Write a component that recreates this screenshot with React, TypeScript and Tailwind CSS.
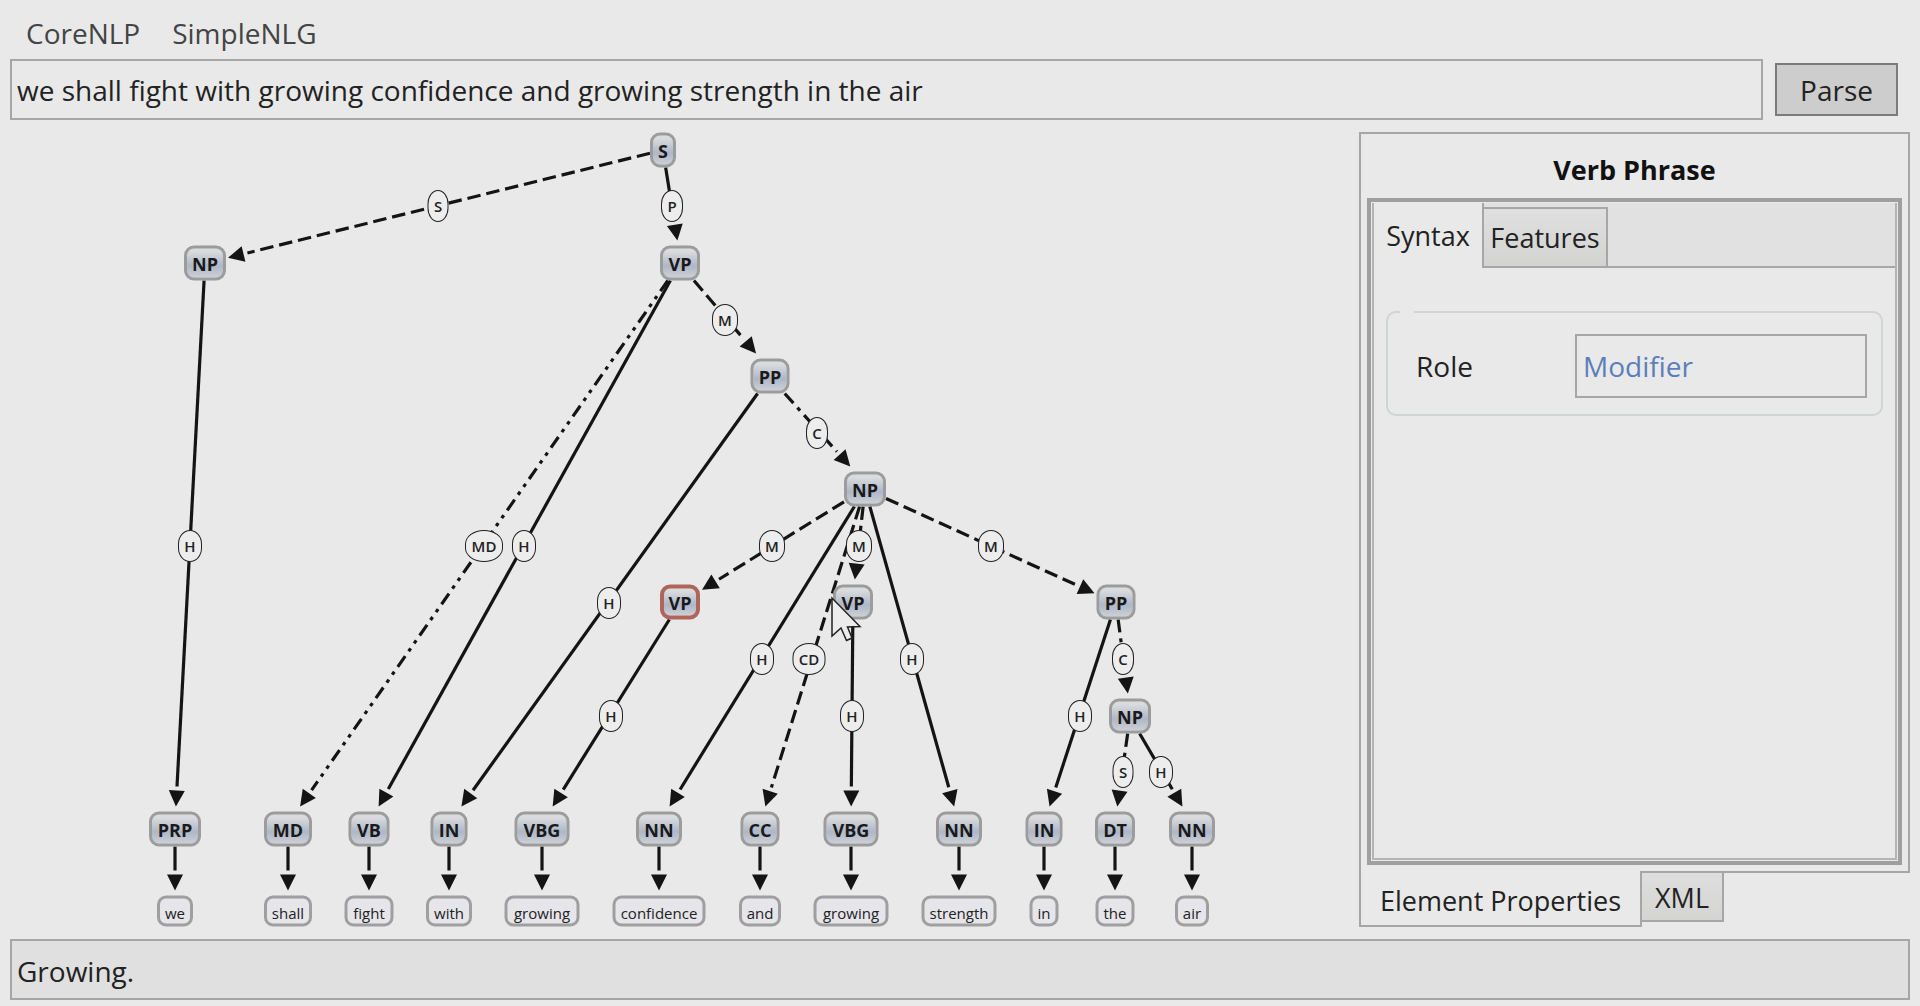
import type { ReactNode } from "react";

type Kind = "solid" | "dash" | "dashDot" | "dashDotDot";

interface GraphNode {
  id: string;
  text: string;
  x: number;
  y: number;
  w: number;
  selected?: boolean;
  word?: boolean;
}

interface Edge {
  from: string;
  to: string;
  kind?: Kind;
  label?: string;
  lx?: number;
  ly?: number;
}

const phrases: GraphNode[] = [
  { id: "s", text: "S", x: 653, y: 18, w: 26 },
  { id: "np1", text: "NP", x: 195, y: 131, w: 42 },
  { id: "vp1", text: "VP", x: 670, y: 131, w: 40 },
  { id: "pp1", text: "PP", x: 760, y: 244, w: 39 },
  { id: "np2", text: "NP", x: 855, y: 357, w: 42 },
  { id: "vp2", text: "VP", x: 670, y: 470, w: 40, selected: true },
  { id: "vp3", text: "VP", x: 843, y: 470, w: 40 },
  { id: "pp2", text: "PP", x: 1106, y: 470, w: 39 },
  { id: "np3", text: "NP", x: 1120, y: 584, w: 42 },
];

const leaves: { tag: string; word: string; x: number; w: number; ww: number }[] = [
  { tag: "PRP", word: "we", x: 165, w: 52, ww: 36 },
  { tag: "MD", word: "shall", x: 278, w: 48, ww: 48 },
  { tag: "VB", word: "fight", x: 359, w: 41, ww: 49 },
  { tag: "IN", word: "with", x: 439, w: 37, ww: 46 },
  { tag: "VBG", word: "growing", x: 532, w: 55, ww: 75 },
  { tag: "NN", word: "confidence", x: 649, w: 46, ww: 93 },
  { tag: "CC", word: "and", x: 750, w: 39, ww: 42 },
  { tag: "VBG", word: "growing", x: 841, w: 55, ww: 75 },
  { tag: "NN", word: "strength", x: 949, w: 46, ww: 75 },
  { tag: "IN", word: "in", x: 1034, w: 37, ww: 29 },
  { tag: "DT", word: "the", x: 1105, w: 40, ww: 39 },
  { tag: "NN", word: "air", x: 1182, w: 46, ww: 34 },
];

const nodes: GraphNode[] = [
  ...phrases,
  ...leaves.map((l, i) => ({ id: `t${i}`, text: l.tag, x: l.x, y: 697, w: l.w })),
  ...leaves.map((l, i) => ({ id: `w${i}`, text: l.word, x: l.x, y: 779, w: l.ww, word: true })),
];

const edges: Edge[] = [
  { from: "s", to: "np1", kind: "dash", label: "S", lx: 428, ly: 74 },
  { from: "s", to: "vp1", label: "P", lx: 662, ly: 74 },
  { from: "np1", to: "t0", label: "H", lx: 180, ly: 414 },
  { from: "vp1", to: "t1", kind: "dashDotDot", label: "MD", lx: 474, ly: 414 },
  { from: "vp1", to: "t2", label: "H", lx: 514, ly: 414 },
  { from: "vp1", to: "pp1", kind: "dash", label: "M", lx: 715, ly: 188 },
  { from: "pp1", to: "t3", label: "H", lx: 599, ly: 471 },
  { from: "pp1", to: "np2", kind: "dashDot", label: "C", lx: 807, ly: 301 },
  { from: "np2", to: "vp2", kind: "dash", label: "M", lx: 762, ly: 414 },
  { from: "np2", to: "t5", label: "H", lx: 752, ly: 527 },
  { from: "np2", to: "t6", kind: "dash", label: "CD", lx: 799, ly: 527 },
  { from: "np2", to: "vp3", kind: "dash", label: "M", lx: 849, ly: 414 },
  { from: "np2", to: "t8", label: "H", lx: 902, ly: 527 },
  { from: "np2", to: "pp2", kind: "dash", label: "M", lx: 981, ly: 414 },
  { from: "vp2", to: "t4", label: "H", lx: 601, ly: 584 },
  { from: "vp3", to: "t7", label: "H", lx: 842, ly: 584 },
  { from: "pp2", to: "t9", label: "H", lx: 1070, ly: 584 },
  { from: "pp2", to: "np3", kind: "dashDot", label: "C", lx: 1113, ly: 527 },
  { from: "np3", to: "t10", kind: "dash", label: "S", lx: 1113, ly: 640 },
  { from: "np3", to: "t11", label: "H", lx: 1151, ly: 640 },
  ...leaves.map((_, i) => ({ from: `t${i}`, to: `w${i}` })),
];

const dashes: Record<Kind, string | undefined> = {
  solid: undefined,
  dash: "13.5 5.9",
  dashDot: "13 6 4 6",
  dashDotDot: "13 6 3.6 6 3.6 6",
};

const labelWidths: Record<string, number> = { S: 21, P: 22, C: 22, H: 24, M: 26, CD: 33, MD: 38 };

const byId = new Map(nodes.map((n) => [n.id, n]));

/* Point where the ray from the centre of a box towards (dx, dy) crosses its
   border, pushed outwards by a gap that depends on the side it crosses. */
function leave(n: GraphNode, dx: number, dy: number, gapX: number, gapY: number) {
  const tx = n.w / 2 / Math.max(Math.abs(dx), 0.001);
  const ty = (n.word ? 15.5 : 17.5) / Math.max(Math.abs(dy), 0.001);
  const t = Math.min(tx, ty);
  return {
    x: n.x + dx * t + (tx < ty ? Math.sign(dx) * gapX : 0),
    y: n.y + dy * t + (tx < ty ? 0 : Math.sign(dy) * gapY),
  };
}

function EdgeLine({ edge }: { edge: Edge }) {
  const a = byId.get(edge.from)!;
  const b = byId.get(edge.to)!;
  const p = leave(a, b.x - a.x, b.y - a.y, 0, 0);
  const q = leave(b, a.x - b.x, a.y - b.y, 2, 5);
  const len = Math.hypot(q.x - p.x, q.y - p.y);
  const ux = (q.x - p.x) / len;
  const uy = (q.y - p.y) / len;
  const base = { x: q.x - ux * 16, y: q.y - uy * 16 };
  const end = { x: q.x - ux * 20, y: q.y - uy * 20 };
  const points = [
    [q.x, q.y],
    [base.x - uy * 8, base.y + ux * 8],
    [base.x + uy * 8, base.y - ux * 8],
  ]
    .map((c) => c.join(","))
    .join(" ");
  return (
    <g>
      <line
        x1={p.x}
        y1={p.y}
        x2={end.x}
        y2={end.y}
        stroke="#141414"
        strokeWidth={3.2}
        strokeDasharray={dashes[edge.kind ?? "solid"]}
      />
      <polygon points={points} fill="#141414" />
    </g>
  );
}

function NodeBox({ node }: { node: GraphNode }) {
  const place = { left: node.x, top: node.y, width: node.w };
  if (node.word) {
    return (
      <div
        style={place}
        className="absolute flex h-[31px] -translate-x-1/2 -translate-y-1/2 items-center justify-center rounded-[9px] border-[3px] border-[#9f9f9f] bg-[#e5e5ea] pt-0.5 text-[15px] leading-5 text-[#222]"
      >
        {node.text}
      </div>
    );
  }
  return (
    <button
      type="button"
      style={place}
      className={
        node.selected
          ? "absolute flex h-[35px] -translate-x-1/2 -translate-y-1/2 items-center justify-center rounded-[10px] border-4 border-[#b0655a] bg-linear-to-b from-[#dadbdd] from-10% via-[#aeb7c8] via-60% to-[#cdd0d5] text-lg leading-5 font-bold text-[#1a1a1a]"
          : "absolute flex h-[35px] -translate-x-1/2 -translate-y-1/2 items-center justify-center rounded-[10px] border-[3px] border-[#9c9c9c] bg-linear-to-b from-[#dadbdd] from-10% via-[#aeb7c8] via-60% to-[#cdd0d5] text-lg leading-5 font-bold text-[#1a1a1a]"
      }
    >
      {node.text}
    </button>
  );
}

function ParseTree() {
  return (
    <section aria-label="Parse tree" className="relative min-w-0 flex-1">
      <svg className="absolute inset-0 h-full w-full overflow-visible" aria-hidden="true">
        {edges.map((e) => (
          <EdgeLine key={e.from + e.to} edge={e} />
        ))}
      </svg>
      {edges.map((e) =>
        e.label ? (
          <span
            key={e.from + e.to}
            style={{ left: e.lx, top: e.ly, width: labelWidths[e.label] }}
            className="absolute flex h-8 -translate-x-1/2 -translate-y-1/2 items-center justify-center rounded-[50%/44%] border border-[#222] bg-[#ededed] text-[15px] leading-4 font-semibold text-[#222]"
          >
            {e.label}
          </span>
        ) : null,
      )}
      {nodes.map((n) => (
        <NodeBox key={n.id} node={n} />
      ))}
      <svg
        className="absolute top-[464px] left-[820px] h-[46px] w-8"
        viewBox="0 0 32 46"
        aria-hidden="true"
      >
        <path
          d="M2 2 V40 L11 32 L16.5 44.5 L22 42 L17.5 31 L30 30.5 Z"
          fill="#ececec"
          stroke="#222"
          strokeWidth="1.5"
        />
      </svg>
    </section>
  );
}

function Group({ children }: { children: ReactNode }) {
  return (
    <fieldset className="mx-3 mt-9 rounded-[10px] border-2 border-[#d0d4d4] pt-3.5 pr-3.5 pb-4 pl-7">
      <legend className="-ml-4 h-4 w-3.5" aria-label="General" />
      {children}
    </fieldset>
  );
}

export default function App() {
  return (
    <div className="flex min-h-screen flex-col bg-[#e9e9e9] px-2.5 pb-1.5 font-['Open_Sans','Noto_Sans',sans-serif] text-[28px] leading-9 text-[#222]">
      <nav className="flex h-[59px] items-center gap-8 px-4 pt-1.5 text-[#444]">
        <button type="button">CoreNLP</button>
        <button type="button">SimpleNLG</button>
      </nav>

      <form className="flex items-center gap-3 pr-3" onSubmit={(e) => e.preventDefault()}>
        <input
          aria-label="Sentence"
          defaultValue="we shall fight with growing confidence and growing strength in the air"
          className="h-[61px] min-w-0 flex-1 border-2 border-[#a6a6a6] px-[5px] outline-none"
        />
        <button type="submit" className="h-[53px] w-[123px] border-2 border-[#7b7b7b] bg-[#cdcdce]">
          Parse
        </button>
      </form>

      <main className="mt-3 flex flex-1">
        <ParseTree />

        <aside className="mb-3 flex w-[551px] flex-col">
          <div className="flex flex-1 flex-col border-2 border-[#a6a6a6] px-1.5 pb-1.5">
            <h1 className="flex h-16 items-center justify-center pt-2 text-[27px] font-bold text-[#111]">
              Verb Phrase
            </h1>
            <div className="flex flex-1 flex-col border-4 border-[#9f9f9f] p-px">
              <div className="flex flex-1 flex-col border-2 border-t-0 border-[#b4b4b4]">
                <div role="tablist" className="flex h-[65px] items-end bg-[#e1e1e1] text-[27px]">
                  <button
                    type="button"
                    role="tab"
                    aria-selected="true"
                    className="h-full w-[110px] border-r-2 border-[#a6a6a6] bg-[#e9e9e9]"
                  >
                    Syntax
                  </button>
                  <button
                    type="button"
                    role="tab"
                    aria-selected="false"
                    className="h-[61px] w-[124px] border-2 border-l-0 border-[#a6a6a6] bg-linear-to-b from-[#dfdfdf] to-[#d3d3d2]"
                  >
                    Features
                  </button>
                  <div className="h-full flex-1 border-b-2 border-[#a6a6a6]" />
                </div>
                <Group>
                  <div className="flex items-center justify-between">
                    <label htmlFor="role">Role</label>
                    <input
                      id="role"
                      defaultValue="Modifier"
                      className="h-16 w-[292px] border-2 border-[#a6a6a6] px-1.5 text-[#5b7fb9] outline-none"
                    />
                  </div>
                </Group>
              </div>
            </div>
          </div>
          <div role="tablist" className="-mt-0.5 flex items-start text-[27px]">
            <button
              type="button"
              role="tab"
              aria-selected="true"
              className="h-14 w-[283px] border-2 border-t-0 border-[#a6a6a6] bg-[#e9e9e9] pt-1.5"
            >
              Element Properties
            </button>
            <button
              type="button"
              role="tab"
              aria-selected="false"
              className="h-[51px] w-[82px] border-2 border-l-0 border-[#a6a6a6] bg-linear-to-b from-[#dedede] to-[#d4d4d3] pt-0.5"
            >
              XML
            </button>
          </div>
        </aside>
      </main>

      <footer className="flex h-[61px] items-center border-2 border-[#a6a6a6] bg-[#e0e0e0] px-[5px] pt-0.5">
        <output>Growing.</output>
      </footer>
    </div>
  );
}
